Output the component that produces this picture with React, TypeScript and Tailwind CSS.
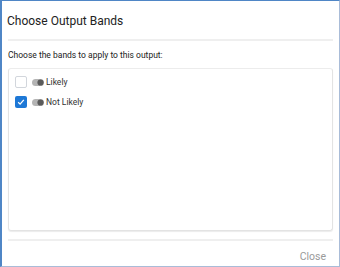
import { useState } from 'react'

type Band = { id: string; name: string }

const BANDS: Band[] = [
  { id: 'likely', name: 'Likely' },
  { id: 'not-likely', name: 'Not Likely' },
]

function ToggleIcon() {
  return (
    <svg width="12" height="7" viewBox="0 0 12 7" className="shrink-0">
      <rect x="0" y="0" width="12" height="7" rx="3.5" fill="#b4b4b4" />
      <circle cx="8.5" cy="3.5" r="3.1" fill="#5a5a5a" />
    </svg>
  )
}

export default function App() {
  const [selected, setSelected] = useState<string[]>(['not-likely'])

  const toggle = (id: string) =>
    setSelected(s => (s.includes(id) ? s.filter(x => x !== id) : [...s, id]))

  return (
    <div
      className="w-[340px] h-[267px] bg-white flex flex-col border-t border-l-2 border-t-[#4f86c6] border-l-[#4f86c6] border-r border-b border-r-[#a9bcd8] border-b-[#a9bcd8] text-[#222]"
      style={{ fontFamily: 'Roboto, "Liberation Sans", sans-serif' }}
    >
      {/* Header */}
      <div className="px-[5px] pt-[12px] pb-[10px] text-[12px] leading-[16px] text-[#222]">
        Choose Output Bands
      </div>
      <div className="mx-[6px] h-[2px] bg-[#efefef]" />

      {/* Body */}
      <div className="flex-1 flex flex-col px-[6px] pt-[8px] min-h-0">
        <div className="text-[8.5px] leading-[12px] text-[#222] mb-[7px]">
          Choose the bands to apply to this output:
        </div>
        <div className="flex-1 rounded-[3px] border border-[#e3e3e3] border-t-[#ececec] shadow-[0_1px_1px_rgba(0,0,0,0.08)] pt-[7px] px-[6px] flex flex-col gap-[8px] mb-[8px]">
          {BANDS.map(b => {
            const on = selected.includes(b.id)
            return (
              <label key={b.id} className="flex items-center gap-[5px] cursor-pointer h-[12px]">
                <span
                  onClick={() => toggle(b.id)}
                  className={`w-[12px] h-[12px] rounded-[2px] flex items-center justify-center shrink-0 ${
                    on ? 'bg-[#1e78d6]' : 'bg-white border border-[#d2d6dc]'
                  }`}
                >
                  {on && (
                    <svg width="8" height="8" viewBox="0 0 8 8">
                      <path d="M1.2 4.3 L3.1 6.1 L6.8 1.8" stroke="white" strokeWidth="1.3" fill="none" />
                    </svg>
                  )}
                </span>
                <ToggleIcon />
                <span className="text-[8.5px] leading-[12px] text-[#333] -ml-[3px]">{b.name}</span>
              </label>
            )
          })}
        </div>
      </div>

      {/* Footer */}
      <div className="mx-[6px] h-[2px] bg-[#efefef]" />
      <div className="flex justify-end px-[13px] pt-[9px] pb-[2px]">
        <button className="text-[10.5px] leading-[14px] text-[#9a9a9a]">Close</button>
      </div>
    </div>
  )
}
